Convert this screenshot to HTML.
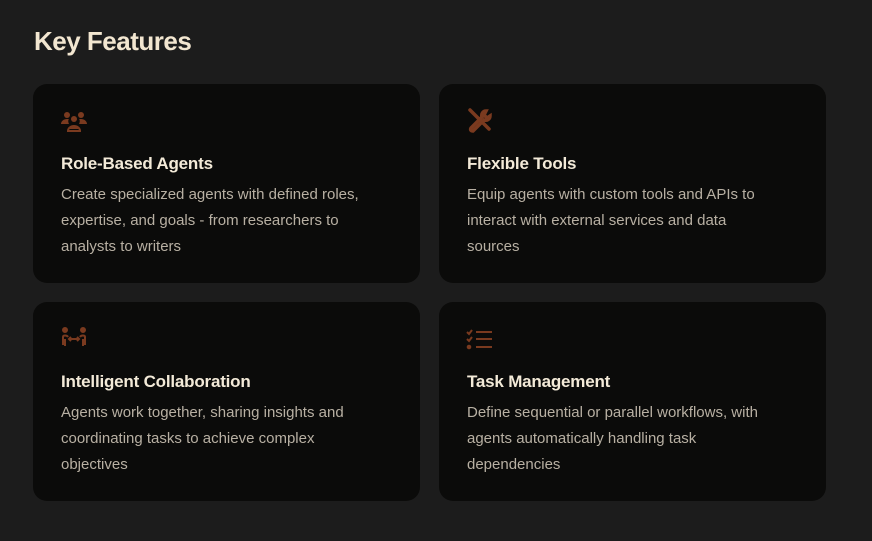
<!DOCTYPE html>
<html><head><style>
body{margin:0;width:872px;height:541px;background:#1c1c1c;font-family:"Liberation Sans",sans-serif;overflow:hidden;position:relative}
h1{position:absolute;left:34px;top:26px;margin:0;font-size:26px;font-weight:bold;color:#f2e6d0;letter-spacing:-0.5px}
.card{position:absolute;width:387px;height:199px;background:#0b0b0a;border-radius:14px}
.ic{position:absolute;left:27px;top:23px;width:28px;height:28px}
.t{position:absolute;left:28px;top:70px;font-size:17px;font-weight:bold;color:#f3ead8;letter-spacing:-0.2px}
.d{position:absolute;left:28px;top:98px;width:315px;font-size:15px;line-height:26px;color:#b8b0a3}
</style></head><body>
<h1>Key Features</h1>
<div class="card" style="left:33px;top:84px">
<svg class="ic" viewBox="0 0 28 28" fill="#7a3a1f"><circle cx="7" cy="8" r="3"/><circle cx="21" cy="8" r="3"/><circle cx="14" cy="12" r="3"/><path d="M1 17c0-3 3-5 6-5h2c-1 1-1 3 0 5z M27 17c0-3-3-5-6-5h-2c1 1 1 3 0 5z"/><path d="M8 24c0-3 3-5 6-5s6 2 6 5z M10 21h8" fill="none" stroke="#7a3a1f" stroke-width="2"/></svg>
<div class="t">Role-Based Agents</div>
<div class="d">Create specialized agents with defined roles, expertise, and goals - from researchers to analysts to writers</div></div>
<div class="card" style="left:439px;top:84px">
<svg class="ic" viewBox="0 0 28 28" fill="none" stroke="#7a3a1f" stroke-width="3.5" stroke-linecap="round"><path d="M4 3l3 3M7 6l16 16M20 4c-3 0-5 3-4 6L5 21c-1 2 0 3 2 3l11-11c3 1 6-1 6-4l-3 2-3-3z" /></svg>
<div class="t">Flexible Tools</div>
<div class="d">Equip agents with custom tools and APIs to interact with external services and data sources</div></div>
<div class="card" style="left:33px;top:302px">
<svg class="ic" viewBox="0 0 28 28" fill="none" stroke="#7a3a1f" stroke-width="2"><circle cx="5" cy="5" r="2" fill="#7a3a1f"/><circle cx="23" cy="5" r="2" fill="#7a3a1f"/><path d="M3 20v-8c0-2 4-2 5 0M25 20v-8c0-2-4-2-5 0M5 14v7M23 14v7M9 14h10M11 12l-2 2 2 2M17 12l2 2-2 2"/></svg>
<div class="t">Intelligent Collaboration</div>
<div class="d">Agents work together, sharing insights and coordinating tasks to achieve complex objectives</div></div>
<div class="card" style="left:439px;top:302px">
<svg class="ic" viewBox="0 0 28 28" fill="none" stroke="#7a3a1f" stroke-width="2"><path d="M1 7l2 2 3-4M1 14l2 2 3-4M10 7h16M10 14h16M10 22h16"/><circle cx="3" cy="22" r="1.3" fill="#7a3a1f"/></svg>
<div class="t">Task Management</div>
<div class="d">Define sequential or parallel workflows, with agents automatically handling task dependencies</div></div>
</body></html>
